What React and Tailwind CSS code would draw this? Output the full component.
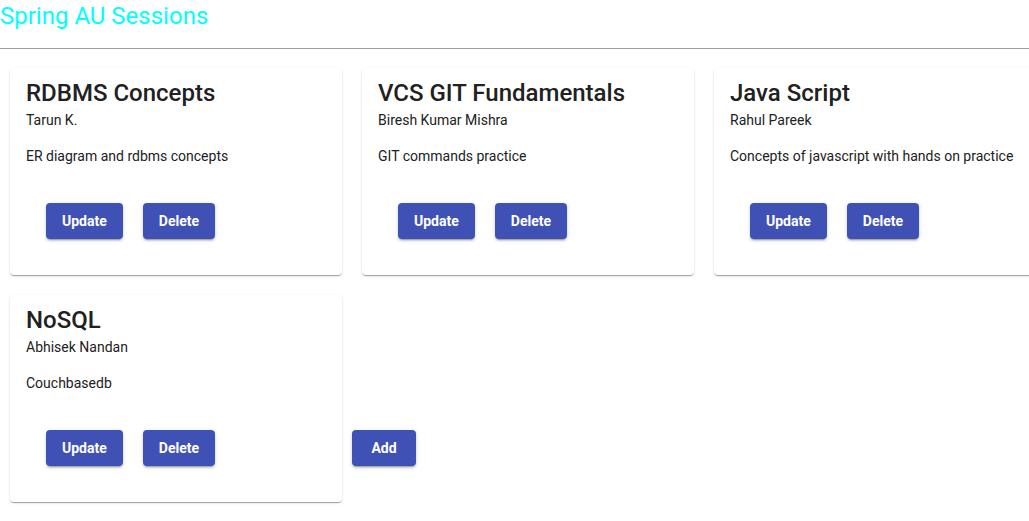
import React from 'react';

const sessions = [
  { id: 1, name: 'RDBMS Concepts', trainer: 'Tarun K.', description: 'ER diagram and rdbms concepts' },
  { id: 2, name: 'VCS GIT Fundamentals', trainer: 'Biresh Kumar Mishra', description: 'GIT commands practice' },
  { id: 3, name: 'Java Script', trainer: 'Rahul Pareek', description: 'Concepts of javascript with hands on practice' },
  { id: 4, name: 'NoSQL', trainer: 'Abhisek Nandan', description: 'Couchbasedb' },
];

const btn =
  'h-9 min-w-16 px-4 rounded-[4px] bg-[#3f51b5] text-center text-white text-[14px] font-bold leading-[35px] shadow-[0_3px_1px_-2px_rgba(0,0,0,0.2),0_2px_2px_0_rgba(0,0,0,0.14),0_1px_5px_0_rgba(0,0,0,0.12)]';

function SessionCard({ session }) {
  return (
    <div className="m-[10px] w-[332px] shrink-0 rounded-[4px] bg-white px-4 pt-[9px] pb-9 shadow-[0_2px_1px_-1px_rgba(0,0,0,0.2),0_1px_1px_0_rgba(0,0,0,0.14),0_1px_3px_0_rgba(0,0,0,0.12)]">
      <h2 className="text-[24px] leading-8 font-medium text-[#212121]">{session.name}</h2>
      <p className="mt-px text-[14px] leading-5 text-[#212121]">{session.trainer}</p>
      <p className="mt-4 text-[14px] leading-5 text-[#212121]">{session.description}</p>
      <div className="mt-[37px] ml-5 flex gap-5">
        <button className={btn}>Update</button>
        <button className={btn}>Delete</button>
      </div>
    </div>
  );
}

export default function App() {
  return (
    <div className="h-[521px] w-[1029px] overflow-hidden bg-white font-['Roboto',sans-serif]">
      <h1 className="text-[24px] leading-8 font-normal text-[#00ffff]">Spring AU Sessions</h1>
      <hr className="mt-4 border-t border-[#9e9e9e]" />
      <div className="mt-[9px] flex w-[1056px] flex-wrap">
        {sessions.map((s) => (
          <SessionCard key={s.id} session={s} />
        ))}
        <div className="flex self-end mb-[46px]">
          <button className={btn}>Add</button>
        </div>
      </div>
    </div>
  );
}
